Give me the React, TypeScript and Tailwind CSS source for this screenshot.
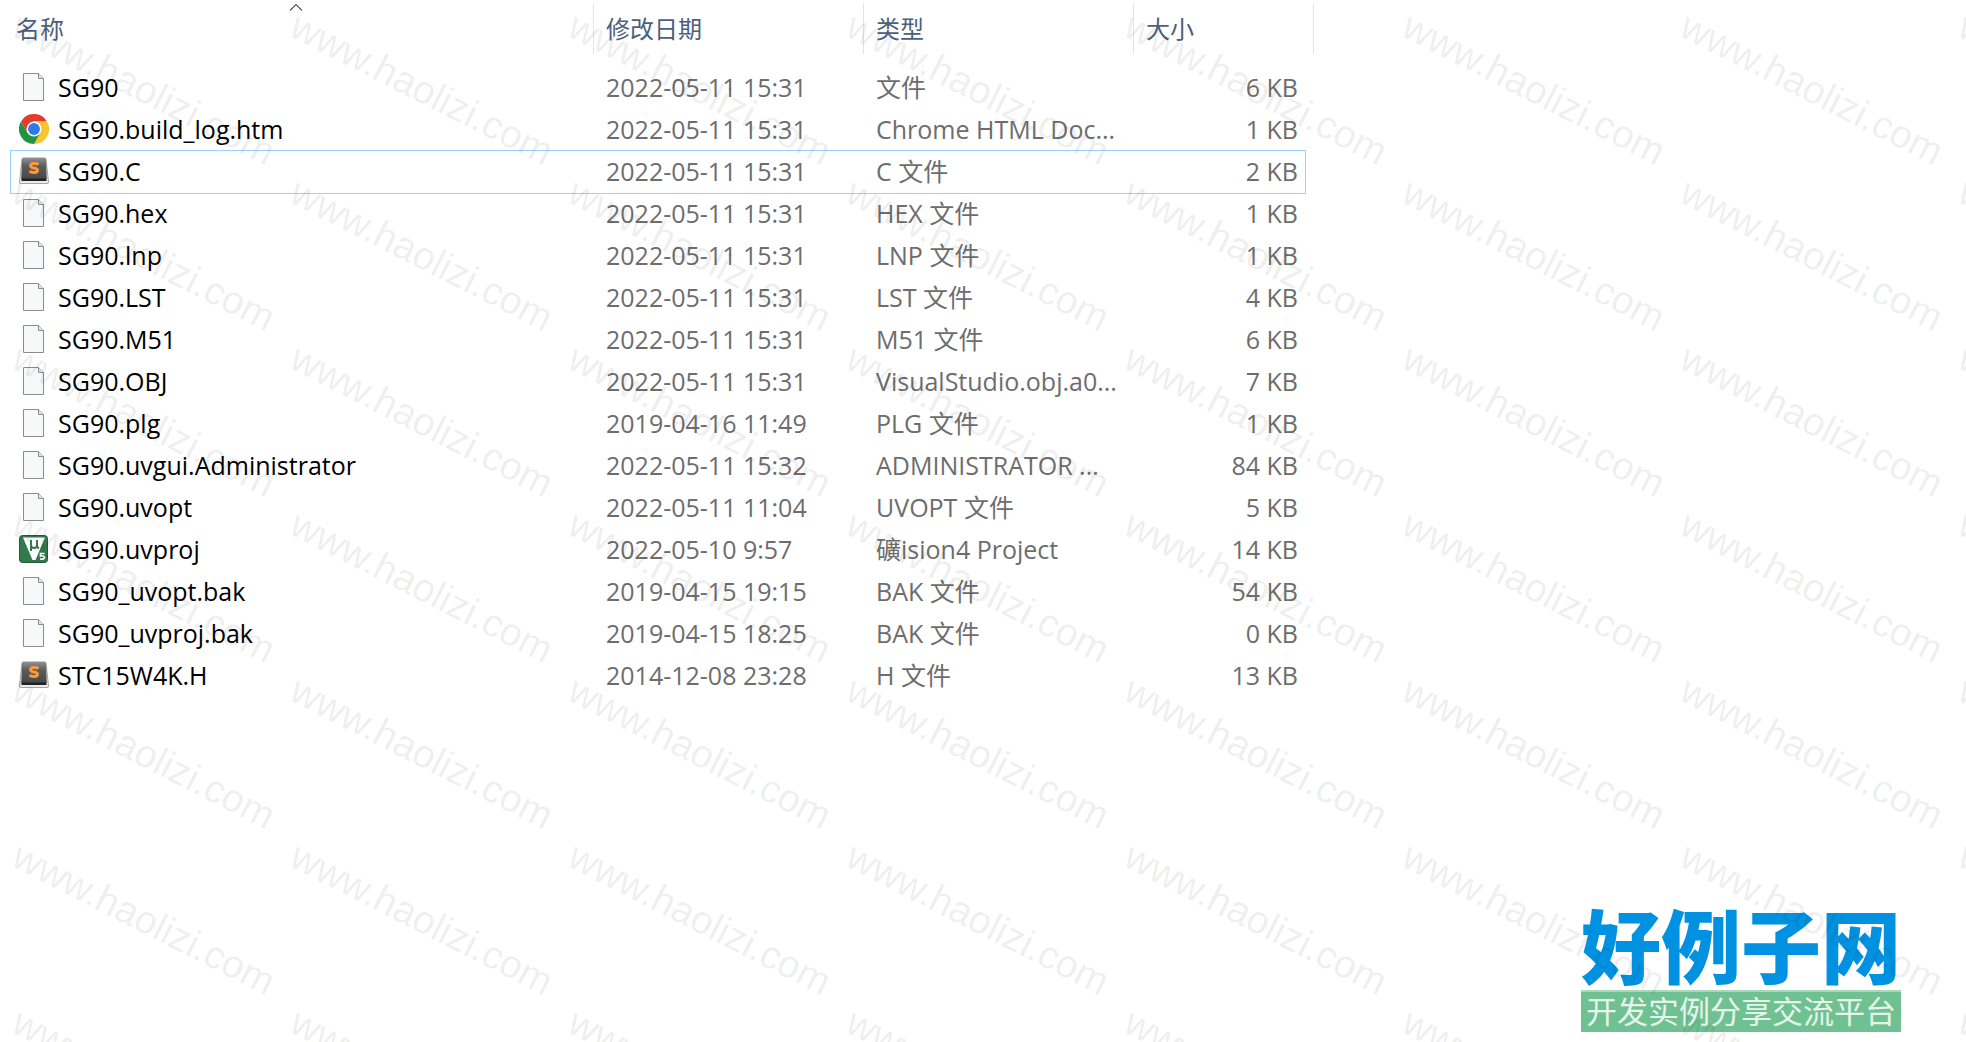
import React from 'react';

type IconKind = 'blank' | 'chrome' | 'sublime' | 'keil';

interface FileEntry {
  name: string;
  modified: string;
  type: string;
  size: string;
  icon: IconKind;
}

const FILES: FileEntry[] = [
  { name: 'SG90', modified: '2022-05-11 15:31', type: '文件', size: '6 KB', icon: 'blank' },
  { name: 'SG90.build_log.htm', modified: '2022-05-11 15:31', type: 'Chrome HTML Doc...', size: '1 KB', icon: 'chrome' },
  { name: 'SG90.C', modified: '2022-05-11 15:31', type: 'C 文件', size: '2 KB', icon: 'sublime' },
  { name: 'SG90.hex', modified: '2022-05-11 15:31', type: 'HEX 文件', size: '1 KB', icon: 'blank' },
  { name: 'SG90.lnp', modified: '2022-05-11 15:31', type: 'LNP 文件', size: '1 KB', icon: 'blank' },
  { name: 'SG90.LST', modified: '2022-05-11 15:31', type: 'LST 文件', size: '4 KB', icon: 'blank' },
  { name: 'SG90.M51', modified: '2022-05-11 15:31', type: 'M51 文件', size: '6 KB', icon: 'blank' },
  { name: 'SG90.OBJ', modified: '2022-05-11 15:31', type: 'VisualStudio.obj.a0...', size: '7 KB', icon: 'blank' },
  { name: 'SG90.plg', modified: '2019-04-16 11:49', type: 'PLG 文件', size: '1 KB', icon: 'blank' },
  { name: 'SG90.uvgui.Administrator', modified: '2022-05-11 15:32', type: 'ADMINISTRATOR ...', size: '84 KB', icon: 'blank' },
  { name: 'SG90.uvopt', modified: '2022-05-11 11:04', type: 'UVOPT 文件', size: '5 KB', icon: 'blank' },
  { name: 'SG90.uvproj', modified: '2022-05-10 9:57', type: '礦ision4 Project', size: '14 KB', icon: 'keil' },
  { name: 'SG90_uvopt.bak', modified: '2019-04-15 19:15', type: 'BAK 文件', size: '54 KB', icon: 'blank' },
  { name: 'SG90_uvproj.bak', modified: '2019-04-15 18:25', type: 'BAK 文件', size: '0 KB', icon: 'blank' },
  { name: 'STC15W4K.H', modified: '2014-12-08 23:28', type: 'H 文件', size: '13 KB', icon: 'sublime' },
];

const SELECTED = 'SG90.C';
const WATERMARK_TILES = 56;

const BlankIcon: React.FC = () => (
  <svg viewBox="0 0 30 30" className="w-[30px] h-[30px]" aria-hidden="true">
    <path d="M4.5 1.5h15l5 5v22h-20z" fill="#f7f8f9" stroke="#8c8c8c" />
    <path d="M19.5 1.5v5h5" fill="#e4e4e4" stroke="#8c8c8c" />
  </svg>
);

const ChromeIcon: React.FC = () => (
  <svg viewBox="0 0 48 48" className="w-[30px] h-[30px]" aria-hidden="true">
    <path d="M24 12h20.800A24 24 0 0 0 3.200 12l10.400 18z" fill="#e33b2e" />
    <path d="M34.400 30 24 48A24 24 0 0 0 44.800 12H24z" fill="#fcc331" />
    <path d="M13.600 30 3.200 12A24 24 0 0 0 24 48l10.400-18z" fill="#229342" />
    <circle cx="24" cy="24" r="12" fill="#fff" />
    <circle cx="24" cy="24" r="9.500" fill="#3079e8" />
  </svg>
);

const SublimeIcon: React.FC = () => (
  <svg viewBox="0 -1 30 30" className="w-[30px] h-[30px]" aria-hidden="true">
    <defs>
      <linearGradient id="key-cap" x1="0" y1="0" x2="0" y2="1">
        <stop offset="0" stopColor="#949494" />
        <stop offset="0.4" stopColor="#5c5c5c" />
        <stop offset="1" stopColor="#484848" />
      </linearGradient>
    </defs>
    <path d="M3 2h24l2.500 23q.2 1.500-1.500 1.500H2Q.3 26.500.5 25z" fill="#ececec" stroke="#a5a5a5" />
    <path d="M2.500 20h25v4h-25z" fill="#222" />
    <path d="M4.500.5h21q1.500 0 1.600 1.500l.6 19.500H2.300L2.900 2Q3 .5 4.500.5z" fill="url(#key-cap)" />
    <path d="M19.500 7.500c-2-1.500-8-1.800-8 1.200 0 3.200 7 1.500 7 4.600 0 3-6 2.500-8 1" fill="none" stroke="#ff9638" strokeWidth="3" />
  </svg>
);

const KeilIcon: React.FC = () => (
  <svg viewBox="0 -1 30 30" className="w-[30px] h-[30px]" aria-hidden="true">
    <rect x="0.5" y="0.5" width="28" height="27" rx="3" fill="#34794a" stroke="#245a36" />
    <path d="M4 2.500h22L16.500 25h-3z" fill="#fff" />
    <path d="M12 5v11M12 10q0 3 3 3t3-3V5M18 10q0 3 2 3" fill="none" stroke="#34794a" strokeWidth="2" />
    <path d="M20 17.500h6v8h-6z" fill="#34794a" />
    <path d="M25.500 18.500h-4V21q4-.5 4 1.500t-4.500 1.500" fill="none" stroke="#fff" strokeWidth="1.600" />
  </svg>
);

const ICONS: Record<IconKind, React.FC> = {
  blank: BlankIcon,
  chrome: ChromeIcon,
  sublime: SublimeIcon,
  keil: KeilIcon,
};

const HeaderCell: React.FC<{ label: string; className?: string; sorted?: boolean }> = ({ label, className = '', sorted }) => (
  <th scope="col" aria-sort={sorted ? 'ascending' : undefined} className="p-0 h-16 align-top font-normal text-left text-2xl">
    <div className={`relative h-[51px] border-r border-[#e5e5e5] ${className}`}>
      <button type="button" className="flex h-full w-full items-center pt-px text-left text-[#4c607a]">
        {label}
      </button>
      {sorted && (
        <svg viewBox="0 0 14 8" className="absolute top-0 left-[49%] w-[14px] h-2 -translate-x-1/2" aria-hidden="true">
          <path d="M1 7.500 7 1.500l6 6" fill="none" stroke="#5a5a5a" strokeWidth="1.200" />
        </svg>
      )}
    </div>
  </th>
);

const FileRow: React.FC<{ file: FileEntry }> = ({ file }) => {
  const Icon = ICONS[file.icon];
  const selected = file.name === SELECTED;

  return (
    <tr aria-selected={selected} className={selected ? 'outline outline-1 outline-[#99d1ff]' : ''}>
      <td className="p-0 pb-0.5 h-[42px]">
        <div className="flex items-center gap-[9px] pl-2 text-black">
          <Icon />
          <span>{file.name}</span>
        </div>
      </td>
      <td className="p-0 pb-0.5 pl-3">{file.modified}</td>
      <td className="p-0 pb-0.5 pl-3">{file.type}</td>
      <td className="p-0 pb-0.5 pr-[7px] text-right">{file.size}</td>
    </tr>
  );
};

const Watermark: React.FC = () => (
  <div aria-hidden="true" className="pointer-events-none absolute inset-0 overflow-hidden">
    <div className="grid w-max grid-cols-[repeat(8,278px)] auto-rows-[166px]">
      {Array.from({ length: WATERMARK_TILES }, (_, i) => (
        <div key={i} className="flex items-center justify-center pt-[10px] pl-[10px]">
          <span className="rotate-[27deg] whitespace-nowrap font-['Liberation_Sans',Arial,sans-serif] text-[39px] leading-none text-black/8">
            www.haolizi.com
          </span>
        </div>
      ))}
    </div>
  </div>
);

const SiteLogo: React.FC = () => (
  <div className="absolute right-[65px] bottom-[10px] flex w-80 flex-col text-center whitespace-nowrap font-['Noto_Sans_CJK_SC',sans-serif]">
    <span className="pb-1 text-[80px] leading-[88px] font-black text-[#0092e0]">好例子网</span>
    <span className="border-t-2 border-[#a9d9bd] bg-[#6fc191] pb-1 text-[31px] leading-9 text-[#e6f5ec]">开发实例分享交流平台</span>
  </div>
);

const App: React.FC = () => (
  <main className="relative min-h-screen overflow-hidden bg-white pt-[3px] pl-[11px] font-['Open_Sans','Noto_Sans_CJK_SC',sans-serif] text-[25px] leading-8 text-[#6d6d6d]">
    <table className="w-[1294px] table-fixed border-separate border-spacing-0 whitespace-nowrap">
      <colgroup>
        <col />
        <col className="w-[270px]" />
        <col className="w-[270px]" />
        <col className="w-[171px]" />
      </colgroup>
      <thead>
        <tr>
          <HeaderCell label="名称" sorted className="pl-[5px]" />
          <HeaderCell label="修改日期" className="pl-3" />
          <HeaderCell label="类型" className="pl-3" />
          <HeaderCell label="大小" className="pl-3 -mr-[9px]" />
        </tr>
      </thead>
      <tbody>
        {FILES.map((file) => (
          <FileRow key={file.name} file={file} />
        ))}
      </tbody>
    </table>
    <SiteLogo />
    <Watermark />
  </main>
);

export default App;
